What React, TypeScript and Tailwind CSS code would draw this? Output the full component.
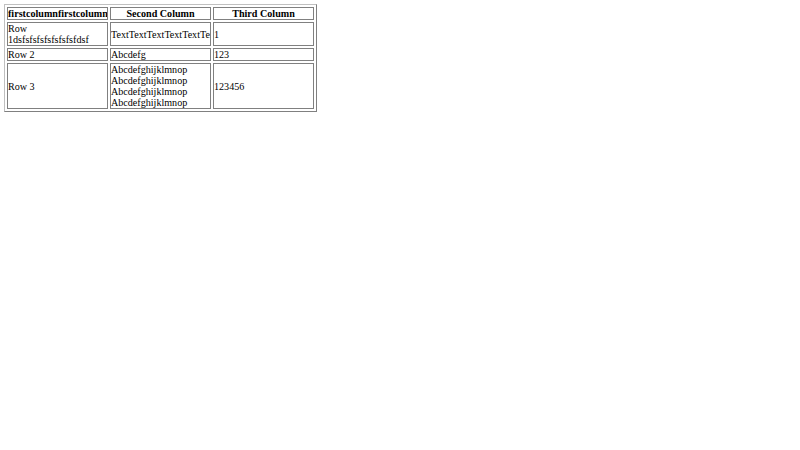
const rows = [
  { a: "Row 1dsfsfsfsfsfsfsfsfdsf", b: ["TextTextTextTextTextText"], c: "1" },
  { a: "Row 2", b: ["Abcdefg"], c: "123" },
  {
    a: "Row 3",
    b: ["Abcdefghijklmnop", "Abcdefghijklmnop", "Abcdefghijklmnop", "Abcdefghijklmnop"],
    c: "123456",
  },
];

export default function App() {
  return (
    <div className="min-h-[450px] bg-white pl-[4px] pt-[4px] font-['Liberation_Serif',serif] text-[10.1px] leading-[11px] text-black">
      <table className="w-[313px] table-fixed border-separate border-spacing-[2px] border border-t-[#c0c0c0] border-l-[#c0c0c0] border-r-[#808080] border-b-[#808080]">
        <thead>
          <tr>
            <th className="overflow-hidden whitespace-nowrap border border-[#808080] p-0 text-left font-bold">
              firstcolumnfirstcolumn
            </th>
            <th className="overflow-hidden whitespace-nowrap border border-[#808080] p-0 text-center font-bold">
              Second Column
            </th>
            <th className="overflow-hidden whitespace-nowrap border border-[#808080] p-0 text-center font-bold">
              Third Column
            </th>
          </tr>
        </thead>
        <tbody>
          {rows.map((r) => (
            <tr key={r.a}>
              <td className="overflow-hidden border border-[#808080] p-0 align-middle">{r.a}</td>
              <td className="overflow-hidden whitespace-nowrap border border-[#808080] p-0 align-middle">
                {r.b.map((t, i) => (
                  <div key={i}>{t}</div>
                ))}
              </td>
              <td className="overflow-hidden border border-[#808080] p-0 align-middle">{r.c}</td>
            </tr>
          ))}
        </tbody>
      </table>
    </div>
  );
}
